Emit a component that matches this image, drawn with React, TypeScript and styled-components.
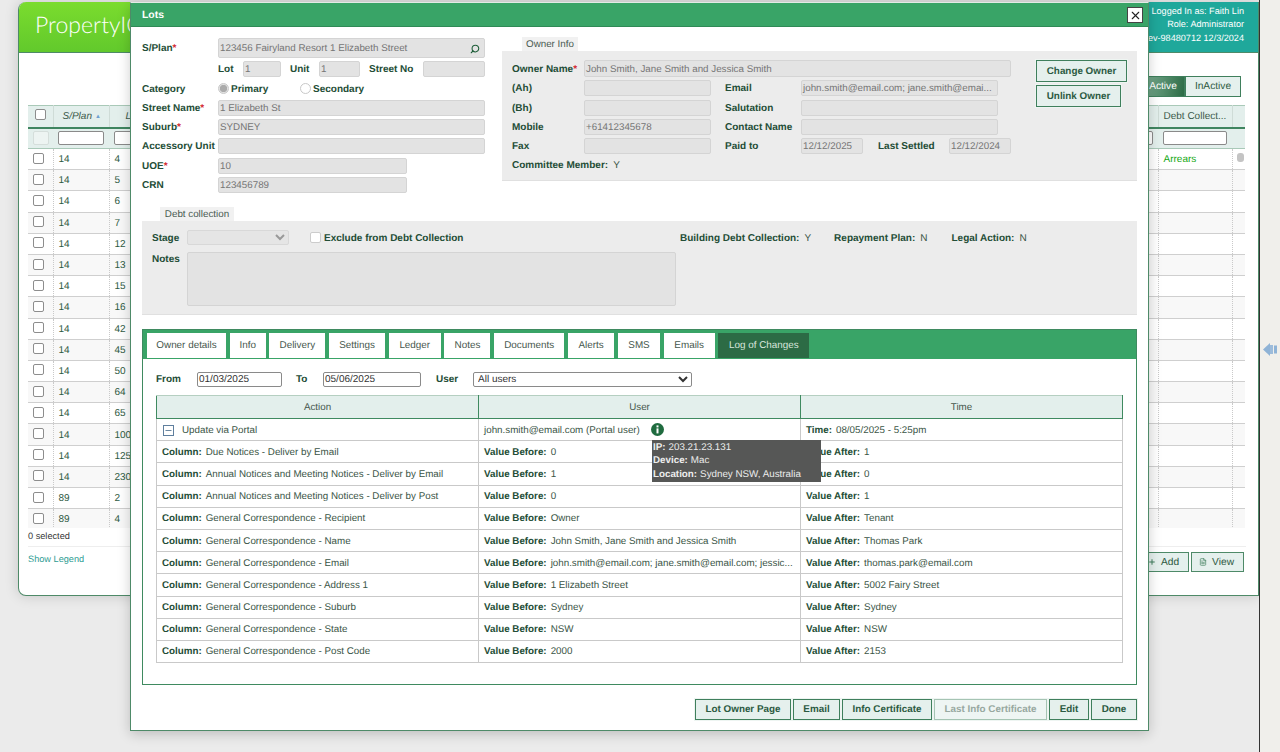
import React from "react";
import styled, { createGlobalStyle } from "styled-components";
import { Search, FileText, Plus, X, Minus } from "lucide-react";

const Global = createGlobalStyle`
  html, body { margin: 0; padding: 0; }
  body { font-family: "Liberation Sans", Arial, sans-serif; background: #ebebeb; text-rendering: geometricPrecision; }
  * { box-sizing: border-box; }
  button, select, input { text-rendering: geometricPrecision; }
`;

const Page = styled.div`
  position: relative; width: 1280px; height: 752px; overflow: hidden; display: flex; background: #ebebeb;
`;
const BackArea = styled.div`flex: 1; padding: 2px 0 0 18px;`;
const Gutter = styled.aside`
  width: 21px; background: #f0efeb; border-left: 1px solid #333; display: flex; flex-direction: column; align-items: center; padding-top: 342px;
`;
const AppWindow = styled.div`
  width: 1241px; height: 594px; background: #fff; border: 1px solid #4e8a68; border-top: none; border-radius: 8px 0 0 8px;
  box-shadow: 0 0 14px rgba(0,0,0,.16); overflow: hidden; display: flex; flex-direction: column;
`;
const AppHeader = styled.header`
  height: 51px; flex: none; display: flex; justify-content: space-between; background: linear-gradient(180deg,#7bdc2e,#62c92c); border-bottom: 1px solid #4e8a68;
`;
const Logo = styled.div`
  font-family: Lato, sans-serif; font-weight: 300; font-size: 23px; color: #fff; padding: 8px 0 0 16px;
`;
const UserInfo = styled.div`
  width: 140px; background: #1fa89b; color: #fff; font-size: 9.1px; line-height: 13.4px; text-align: right; padding: 3px 14px 0 0; white-space: nowrap; direction: rtl; overflow: hidden;
`;
const UserLine = styled.div`direction: ltr; unicode-bidi: isolate;`;
const AppBody = styled.div`flex: 1; padding: 0 13px 0 9px; display: flex; flex-direction: column;`;
const Toolbar = styled.div`height: 52px; flex: none; display: flex; justify-content: flex-end; align-items: flex-start; padding: 23px 4px 0 0;`;
const Toggle = styled.div<{ $on?: boolean; $w: number }>`
  width: ${p => p.$w}px; height: 21px; display: flex; align-items: center; justify-content: center; font-size: 10.2px;
  border: 1px solid #3f7f5c; color: ${p => (p.$on ? "#fff" : "#2e5a42")};
  background: ${p => (p.$on ? "linear-gradient(100deg,#7fb095,#2c6b45)" : "#e5f0ed")};
`;
const GridClip = styled.div`height: 423px; overflow: hidden; flex: none;`;
const BackTable = styled.table`
  width: 1218px; table-layout: fixed; border-collapse: collapse; font-size: 10px; color: #2e5a42;
`;
const BackHead = styled.th<{ $pl?: number; $plain?: boolean }>`
  height: 22px; background: #e3efec; border-bottom: 2px solid #3f8560; border-top: 1px solid #a9c9b8; border-right: 1px solid #cfdcd7; font-weight: 400;
  font-style: ${p => (p.$plain ? "normal" : "italic")}; text-align: left; padding: 0 5px 0 ${p => p.$pl ?? 5}px; color: #3c5a4a; white-space: nowrap; overflow: hidden;
`;
const SortMark = styled.span`color: #6f9fd0; font-size: 6px; font-style: normal; margin-left: 3px; vertical-align: 1px;`;
const BackFilter = styled.td`height: 21px; background: #e3efec; border-bottom: 1px solid #a9c9b8; padding: 0 5px;`;
const FilterBox = styled.input`width: 100%; height: 14px; display: block; border: 1px solid #8a8a8a; border-radius: 2px; background: #fff; padding: 0;`;
const FakeBox = styled.div`width: 16px; height: 14px; background: #edf4f2; border: 1px solid #d5dedb; border-radius: 2px;`;
const BackRow = styled.tr<{ $alt: boolean }>`height: 21.2px; background: ${p => (p.$alt ? "#f8f8f8" : "#fff")};`;
const BackCell = styled.td`border-bottom: 1px solid #cfcfcf; border-right: 1px dotted #c9c9c9; padding: 1px 5px 0; vertical-align: middle;`;
const Arrears = styled.span`color: #13a813;`;
const Thumb = styled.div`width: 7px; height: 9px; background: #c4c4c4; border-radius: 3px; margin: -5px 0 0 -1px;`;
const Tick = styled.input.attrs({ type: "checkbox" })`
  appearance: none; width: 11px; height: 11px; margin: 0 0 3px 0; display: block; border: 1px solid #8d8d8d; border-radius: 2px; background: #fff;
`;
const Selected = styled.div`height: 19px; flex: none; font-size: 9.2px; color: #333; display: flex; align-items: center; padding-bottom: 3px; border-bottom: 1px solid #eee; width: 1218px;`;
const BackFooter = styled.div`display: flex; justify-content: space-between; align-items: flex-start; padding: 5px 2px 0 0; width: 1218px;`;
const Legend = styled.a`font-size: 9.2px; color: #2d9c92; margin-top: 2px;`;
const SmallBtns = styled.div`display: flex; gap: 2px;`;
const SmallBtn = styled.div`
  height: 20px; padding: 0 9px 0 7px; display: flex; align-items: center; gap: 5px; font-size: 10.2px; color: #2e5a42; background: #e5f0ed; border: 1px solid #4e8a68;
`;

const Modal = styled.div`
  position: absolute; left: 130px; top: 2px; width: 1019px; height: 729px; background: #fff; border: 1px solid #4e8a68; border-top-color: #e2ebe6;
  box-shadow: 0 3px 12px rgba(0,0,0,.2); display: flex; flex-direction: column;
`;
const ModalHead = styled.header`
  height: 24px; flex: none; background: #39a467; border-bottom: 1px solid #2f8a56; display: flex; align-items: center; justify-content: space-between; padding: 1px 5px 0 11px;
  font-size: 10.4px; font-weight: 700; color: #fff;
`;
const CloseBtn = styled.div`
  width: 16px; height: 16px; background: #fff; border: 1px solid #444; color: #222; display: flex; align-items: center; justify-content: center;
`;
const ModalBody = styled.div`flex: 1; padding: 11px 11px 0 11px; display: flex; flex-direction: column;`;
const TopRow = styled.div`display: flex; height: 169px; flex: none;`;
const LeftForm = styled.div`width: 343px; display: flex; flex-direction: column; gap: 3.3px;`;
const Row = styled.div<{ $h?: number }>`display: flex; align-items: center; height: ${p => p.$h ?? 16}px; flex: none;`;
const Label = styled.label<{ $w?: number; $ml?: number; $mt?: number }>`
  width: ${p => (p.$w ? `${p.$w}px` : "auto")}; margin: ${p => p.$mt ?? 1}px 0 0 ${p => p.$ml ?? 0}px; flex: none; font-size: 10px; font-weight: 700; color: #234d36; white-space: nowrap;
`;
const Req = styled.span`color: #d2232a;`;
const Field = styled.div<{ $w: number; $h?: number; $ml?: number }>`
  width: ${p => p.$w}px; height: ${p => p.$h ?? 16}px; margin-left: ${p => p.$ml ?? 0}px; flex: none; background: #e3e3e3; border: 1px solid #d4d4d4; border-radius: 2px;
  font-size: 9.8px; color: #757575; padding: 1px 1px 0 1px; display: flex; align-items: center; justify-content: space-between; white-space: nowrap; overflow: hidden;
`;
const Lens = styled(Search)`margin-right: 3px; transform: scaleX(-1); color: #1f5f3a; flex: none;`;
const RadioDot = styled.span<{ $on?: boolean; $ml?: number }>`
  width: 11px; height: 11px; border-radius: 50%; flex: none; margin-left: ${p => p.$ml ?? 0}px; margin-right: 2px; border: 1px solid #c9c9c9;
  background: ${p => (p.$on ? "radial-gradient(circle,#ababab 0 3.4px,#e2e2e2 3.9px)" : "#fff")};
`;
const RightCol = styled.div`margin: -1px 0 0 17px; width: 635px; display: flex; flex-direction: column;`;
const SectionTab = styled.div<{ $ml: number; $w: number }>`
  width: ${p => p.$w}px; height: 14px; margin-left: ${p => p.$ml}px; background: #f1f1f1; font-size: 9.8px; padding-top: 1px; color: #4a5b51; display: flex; align-items: center; justify-content: center; flex: none;
`;
const OwnerPanel = styled.div`
  height: 130px; background: #ececec; border-bottom: 1px solid #e0e0e0; padding: 9px 0 0 10px; display: flex; flex: none;
`;
const OwnerFields = styled.div`width: 499px; display: flex; flex-direction: column; gap: 3.3px;`;
const OwnerBtns = styled.div`margin-left: 25px; display: flex; flex-direction: column; align-items: flex-start; gap: 3px;`;
const ActionBtn = styled.button<{ $w?: number; $h?: number; $off?: boolean }>`
  width: ${p => (p.$w ? `${p.$w}px` : "auto")}; height: ${p => p.$h ?? 21}px; padding: 0; flex: none;
  font-family: inherit; font-size: 9.85px; font-weight: 700; background: ${p => (p.$off ? "#eef5f3" : "#e5f0ed")};
  color: ${p => (p.$off ? "#97a8a0" : "#2b5a41")}; border: 1px solid ${p => (p.$off ? "#a5c4b3" : "#3f7f5c")}; border-radius: 0; outline: 1px solid #eef5f2;
`;
const Value = styled.span<{ $ml?: number }>`font-size: 10px; margin-top: 1px; color: #3a5546; margin-left: ${p => p.$ml ?? 5}px; white-space: nowrap;`;
const DebtPanel = styled.div`
  height: 94px; background: #ececec; border-bottom: 1px solid #e0e0e0; padding: 9px 0 0 10px; flex: none;
`;
const DebtTop = styled.div`display: flex; align-items: center; height: 15px;`;
const DebtBottom = styled.div`display: flex; align-items: flex-start; margin-top: 7px;`;
const StageSelect = styled.select`
  width: 102px; height: 15px; flex: none; background: #e3e3e3; border: 1px solid #d0d0d0; border-radius: 2px; font-size: 10px; padding: 0; color: #777;
`;
const WhiteTick = styled.span`width: 11px; height: 11px; margin: 0 3px 0 21px; background: #fff; border: 1px solid #ccc; border-radius: 2px; flex: none;`;
const NotesBox = styled.div`width: 489px; height: 54px; background: #e3e3e3; border: 1px solid #d4d4d4; border-radius: 2px;`;
const TabsPanel = styled.section`
  margin-top: 14px; height: 356px; flex: none; border: 1px solid #3f8a60; display: flex; flex-direction: column; padding: 0 13px 0 13px;
`;
const TabBar = styled.nav`
  height: 29px; flex: none; background: #39a467; margin: 0 -13px; padding: 3px 0 1px 4px; display: flex; gap: 3.7px;
`;
const Tab = styled.div<{ $w: number; $on?: boolean }>`
  width: ${p => p.$w}px; display: flex; align-items: center; justify-content: center; font-size: 9.9px;
  background: ${p => (p.$on ? "#2c6b45" : "#fff")}; color: ${p => (p.$on ? "#d9e6de" : "#46574d")};
`;
const FilterRow = styled.div`height: 36px; flex: none; display: flex; align-items: center; padding-top: 4px;`;
const DateInput = styled.div<{ $w: number; $ml: number }>`
  width: ${p => p.$w}px; margin-left: ${p => p.$ml}px; height: 15px; flex: none; border: 1px solid #8a8a8a; border-radius: 2px; font-size: 10px; color: #333; padding: 1px 0 0 1px; display: flex; align-items: center; background: #fff;
`;
const UserSelect = styled.select`
  width: 219px; height: 15px; margin-left: 13px; flex: none; font-size: 10px; font-family: inherit; color: #333; border: 1px solid #8a8a8a; border-radius: 2px; background: #fff; padding: 0;
`;
const LogTable = styled.table`
  width: 966px; table-layout: fixed; border-collapse: collapse; font-size: 9.8px; color: #3a5546; flex: none;
`;
const LogHead = styled.th`
  height: 23px; background: #e3efec; font-weight: 400; font-size: 9.8px; color: #46574d; padding: 0; border: 1px solid #3f8a60; border-top-color: #b5cfc1;
`;
const LogRow = styled.tr`height: 22.2px;`;
const LogCell = styled.td`
  position: relative; padding: 1px 0 0 5px; border: 1px solid #c9c9c9; white-space: nowrap; overflow: visible;
`;
const B = styled.b`color: #234d36; margin-right: 4px;`;
const MinusBox = styled.span`
  display: inline-flex; width: 11px; height: 11px; border: 1px solid #5f7f9e; vertical-align: -2px; margin: 0 8px 0 1px; align-items: center; justify-content: center; color: #3a5f80;
`;
const InfoIcon = styled.svg`position: absolute; left: 172px; top: 4px;`;
const Tip = styled.div`
  position: absolute; left: 173px; top: 21px; width: 169px; height: 42px; z-index: 3; background: #565756; color: #ececec; font-size: 9.8px; line-height: 13.4px; padding: 1px 0 0 1px;
`;
const TipB = styled.b`color: #eee; margin-right: 3px;`;
const Footer = styled.div`display: flex; justify-content: flex-end; gap: 2px; margin-top: 14px;`;

const backRows: [string, string][] = [
  ["14","4"],["14","5"],["14","6"],["14","7"],["14","12"],["14","13"],["14","15"],["14","16"],["14","42"],["14","45"],
  ["14","50"],["14","64"],["14","65"],["14","100"],["14","125"],["14","230"],["89","2"],["89","4"],
];
const tabs: [string, number][] = [
  ["Owner details",79],["Info",36],["Delivery",56],["Settings",56],["Ledger",52],["Notes",46],["Documents",70],["Alerts",46.5],["SMS",42],["Emails",51],
];
const logRows: [string, string, string][] = [
  ["Due Notices - Deliver by Email","0","1"],
  ["Annual Notices and Meeting Notices - Deliver by Email","1","0"],
  ["Annual Notices and Meeting Notices - Deliver by Post","0","1"],
  ["General Correspondence - Recipient","Owner","Tenant"],
  ["General Correspondence - Name","John Smith, Jane Smith and Jessica Smith","Thomas Park"],
  ["General Correspondence - Email","john.smith@email.com; jane.smith@email.com; jessic...","thomas.park@email.com"],
  ["General Correspondence - Address 1","1 Elizabeth Street","5002 Fairy Street"],
  ["General Correspondence - Suburb","Sydney","Sydney"],
  ["General Correspondence - State","NSW","NSW"],
  ["General Correspondence - Post Code","2000","2153"],
];

export default function App() {
  return (
    <Page>
      <Global />
      <BackArea>
        <AppWindow>
          <AppHeader>
            <Logo>PropertyIQ</Logo>
            <UserInfo>
              <UserLine>Logged In as: Faith Lin</UserLine>
              <UserLine>Role: Administrator</UserLine>
              <UserLine>Rev-98480712 12/3/2024</UserLine>
            </UserInfo>
          </AppHeader>
          <AppBody>
            <Toolbar>
              <Toggle $on $w={44}>Active</Toggle>
              <Toggle $w={56}>InActive</Toggle>
            </Toolbar>
            <GridClip>
              <BackTable>
                <colgroup>
                  <col width={25} /><col width={56} /><col width={1049} /><col width={74} /><col width={14} />
                </colgroup>
                <thead>
                  <tr>
                    <BackHead $pl={7}><Tick readOnly /></BackHead>
                    <BackHead $pl={9}>S/Plan<SortMark>▲</SortMark></BackHead>
                    <BackHead $pl={16}>Lot</BackHead>
                    <BackHead $plain>Debt Collect...</BackHead>
                    <BackHead $plain />
                  </tr>
                  <tr>
                    <BackFilter><FakeBox /></BackFilter>
                    <BackFilter><FilterBox readOnly /></BackFilter>
                    <BackFilter><FilterBox readOnly /></BackFilter>
                    <BackFilter><FilterBox readOnly /></BackFilter>
                    <BackFilter />
                  </tr>
                </thead>
                <tbody>
                  {backRows.map(([a, b], i) => (
                    <BackRow key={i} $alt={i % 2 === 1}>
                      <BackCell><Tick readOnly /></BackCell>
                      <BackCell>{a}</BackCell>
                      <BackCell>{b}</BackCell>
                      <BackCell>{i === 0 ? <Arrears>Arrears</Arrears> : null}</BackCell>
                      <BackCell>{i === 0 ? <Thumb /> : null}</BackCell>
                    </BackRow>
                  ))}
                </tbody>
              </BackTable>
            </GridClip>
            <Selected>0 selected</Selected>
            <BackFooter>
              <Legend>Show Legend</Legend>
              <SmallBtns>
                <SmallBtn><Plus size={8} strokeWidth={3} color="#3f7f5c" />Add</SmallBtn>
                <SmallBtn><FileText size={8} color="#3f7f5c" />View</SmallBtn>
              </SmallBtns>
            </BackFooter>
          </AppBody>
        </AppWindow>
      </BackArea>
      <Gutter>
        <svg width="15" height="15" viewBox="0 0 15 15">
          <path d="M0 7.5 7 1V14Z" fill="#8fb3d6" />
          <rect x="7" y="3" width="3" height="9" fill="#9dbcdb" />
          <rect x="11" y="3.5" width="3" height="8" fill="#8fb3d6" />
        </svg>
      </Gutter>

      <Modal>
        <ModalHead>
          Lots
          <CloseBtn><X size={13} strokeWidth={2} /></CloseBtn>
        </ModalHead>
        <ModalBody>
          <TopRow>
            <LeftForm>
              <Row $h={20}>
                <Label $w={76}>S/Plan<Req>*</Req></Label>
                <Field $w={267} $h={20}>
                  <span>123456 Fairyland Resort 1 Elizabeth Street</span>
                  <Lens size={10} strokeWidth={2.6} />
                </Field>
              </Row>
              <Row>
                <Label $ml={76} $w={25}>Lot</Label>
                <Field $w={38}>1</Field>
                <Label $ml={9} $w={29}>Unit</Label>
                <Field $w={41}>1</Field>
                <Label $ml={9} $w={54}>Street No</Label>
                <Field $w={62} />
              </Row>
              <Row>
                <Label $w={76}>Category</Label>
                <RadioDot $on /><Label $w={69}>Primary</Label>
                <RadioDot /><Label>Secondary</Label>
              </Row>
              <Row>
                <Label $w={76}>Street Name<Req>*</Req></Label>
                <Field $w={267}>1 Elizabeth St</Field>
              </Row>
              <Row>
                <Label $w={76}>Suburb<Req>*</Req></Label>
                <Field $w={267}>SYDNEY</Field>
              </Row>
              <Row>
                <Label $w={76}>Accessory Unit</Label>
                <Field $w={267} />
              </Row>
              <Row>
                <Label $w={76}>UOE<Req>*</Req></Label>
                <Field $w={189}>10</Field>
              </Row>
              <Row>
                <Label $w={76}>CRN</Label>
                <Field $w={189}>123456789</Field>
              </Row>
            </LeftForm>
            <RightCol>
              <SectionTab $ml={20} $w={56}>Owner Info</SectionTab>
              <OwnerPanel>
                <OwnerFields>
                  <Row $h={17}>
                    <Label $w={72}>Owner Name<Req>*</Req></Label>
                    <Field $w={427} $h={17}>John Smith, Jane Smith and Jessica Smith</Field>
                  </Row>
                  <Row>
                    <Label $w={72}>(Ah)</Label>
                    <Field $w={127} />
                    <Label $ml={14} $w={76}>Email</Label>
                    <Field $w={197}>john.smith@email.com; jane.smith@emai...</Field>
                  </Row>
                  <Row>
                    <Label $w={72}>(Bh)</Label>
                    <Field $w={127} />
                    <Label $ml={14} $w={76}>Salutation</Label>
                    <Field $w={197} />
                  </Row>
                  <Row>
                    <Label $w={72}>Mobile</Label>
                    <Field $w={127}>+61412345678</Field>
                    <Label $ml={14} $w={76}>Contact Name</Label>
                    <Field $w={197} />
                  </Row>
                  <Row>
                    <Label $w={72}>Fax</Label>
                    <Field $w={127} />
                    <Label $ml={14} $w={76}>Paid to</Label>
                    <Field $w={62}>12/12/2025</Field>
                    <Label $ml={15} $w={71}>Last Settled</Label>
                    <Field $w={62}>12/12/2024</Field>
                  </Row>
                  <Row>
                    <Label>Committee Member:</Label>
                    <Value>Y</Value>
                  </Row>
                </OwnerFields>
                <OwnerBtns>
                  <ActionBtn $w={91} $h={22}>Change Owner</ActionBtn>
                  <ActionBtn $w={85} $h={22}>Unlink Owner</ActionBtn>
                </OwnerBtns>
              </OwnerPanel>
            </RightCol>
          </TopRow>
          <SectionTab $ml={18} $w={74}>Debt collection</SectionTab>
          <DebtPanel>
            <DebtTop>
              <Label $w={35}>Stage</Label>
              <StageSelect disabled><option /></StageSelect>
              <WhiteTick />
              <Label $w={356}>Exclude from Debt Collection</Label>
              <Label>Building Debt Collection:</Label>
              <Value>Y</Value>
              <Label $ml={23}>Repayment Plan:</Label>
              <Value>N</Value>
              <Label $ml={24}>Legal Action:</Label>
              <Value>N</Value>
            </DebtTop>
            <DebtBottom>
              <Label $w={35} $mt={2}>Notes</Label>
              <NotesBox />
            </DebtBottom>
          </DebtPanel>
          <TabsPanel>
            <TabBar>
              {tabs.map(([t, w]) => <Tab key={t} $w={w}>{t}</Tab>)}
              <Tab $w={91} $on>Log of Changes</Tab>
            </TabBar>
            <FilterRow>
              <Label $w={41}>From</Label>
              <DateInput $w={85} $ml={0}>01/03/2025</DateInput>
              <Label $ml={14} $w={27}>To</Label>
              <DateInput $w={98} $ml={0}>05/06/2025</DateInput>
              <Label $ml={15} $w={24}>User</Label>
              <UserSelect defaultValue="All users"><option>All users</option></UserSelect>
            </FilterRow>
            <LogTable>
              <colgroup><col width={322} /><col width={322} /><col width={322} /></colgroup>
              <thead>
                <tr><LogHead>Action</LogHead><LogHead>User</LogHead><LogHead>Time</LogHead></tr>
              </thead>
              <tbody>
                <LogRow>
                  <LogCell><MinusBox><Minus size={9} strokeWidth={2} /></MinusBox>Update via Portal</LogCell>
                  <LogCell>
                    john.smith@email.com (Portal user)
                    <InfoIcon width="13" height="13" viewBox="0 0 13 13">
                      <circle cx="6.5" cy="6.5" r="6.5" fill="#1f6b3f" />
                      <rect x="5.5" y="2.4" width="2" height="2" fill="#fff" />
                      <rect x="5.5" y="5.4" width="2" height="5" fill="#fff" />
                    </InfoIcon>
                    <Tip>
                      <div><TipB>IP:</TipB>203.21.23.131</div>
                      <div><TipB>Device:</TipB>Mac</div>
                      <div><TipB>Location:</TipB>Sydney NSW, Australia</div>
                    </Tip>
                  </LogCell>
                  <LogCell><B>Time:</B>08/05/2025 - 5:25pm</LogCell>
                </LogRow>
                {logRows.map(([c, before, after]) => (
                  <LogRow key={c}>
                    <LogCell><B>Column:</B>{c}</LogCell>
                    <LogCell><B>Value Before:</B>{before}</LogCell>
                    <LogCell><B>Value After:</B>{after}</LogCell>
                  </LogRow>
                ))}
              </tbody>
            </LogTable>
          </TabsPanel>
          <Footer>
            <ActionBtn $w={96}>Lot Owner Page</ActionBtn>
            <ActionBtn $w={47}>Email</ActionBtn>
            <ActionBtn $w={90}>Info Certificate</ActionBtn>
            <ActionBtn $w={113} $off>Last Info Certificate</ActionBtn>
            <ActionBtn $w={40}>Edit</ActionBtn>
            <ActionBtn $w={46}>Done</ActionBtn>
          </Footer>
        </ModalBody>
      </Modal>
    </Page>
  );
}
